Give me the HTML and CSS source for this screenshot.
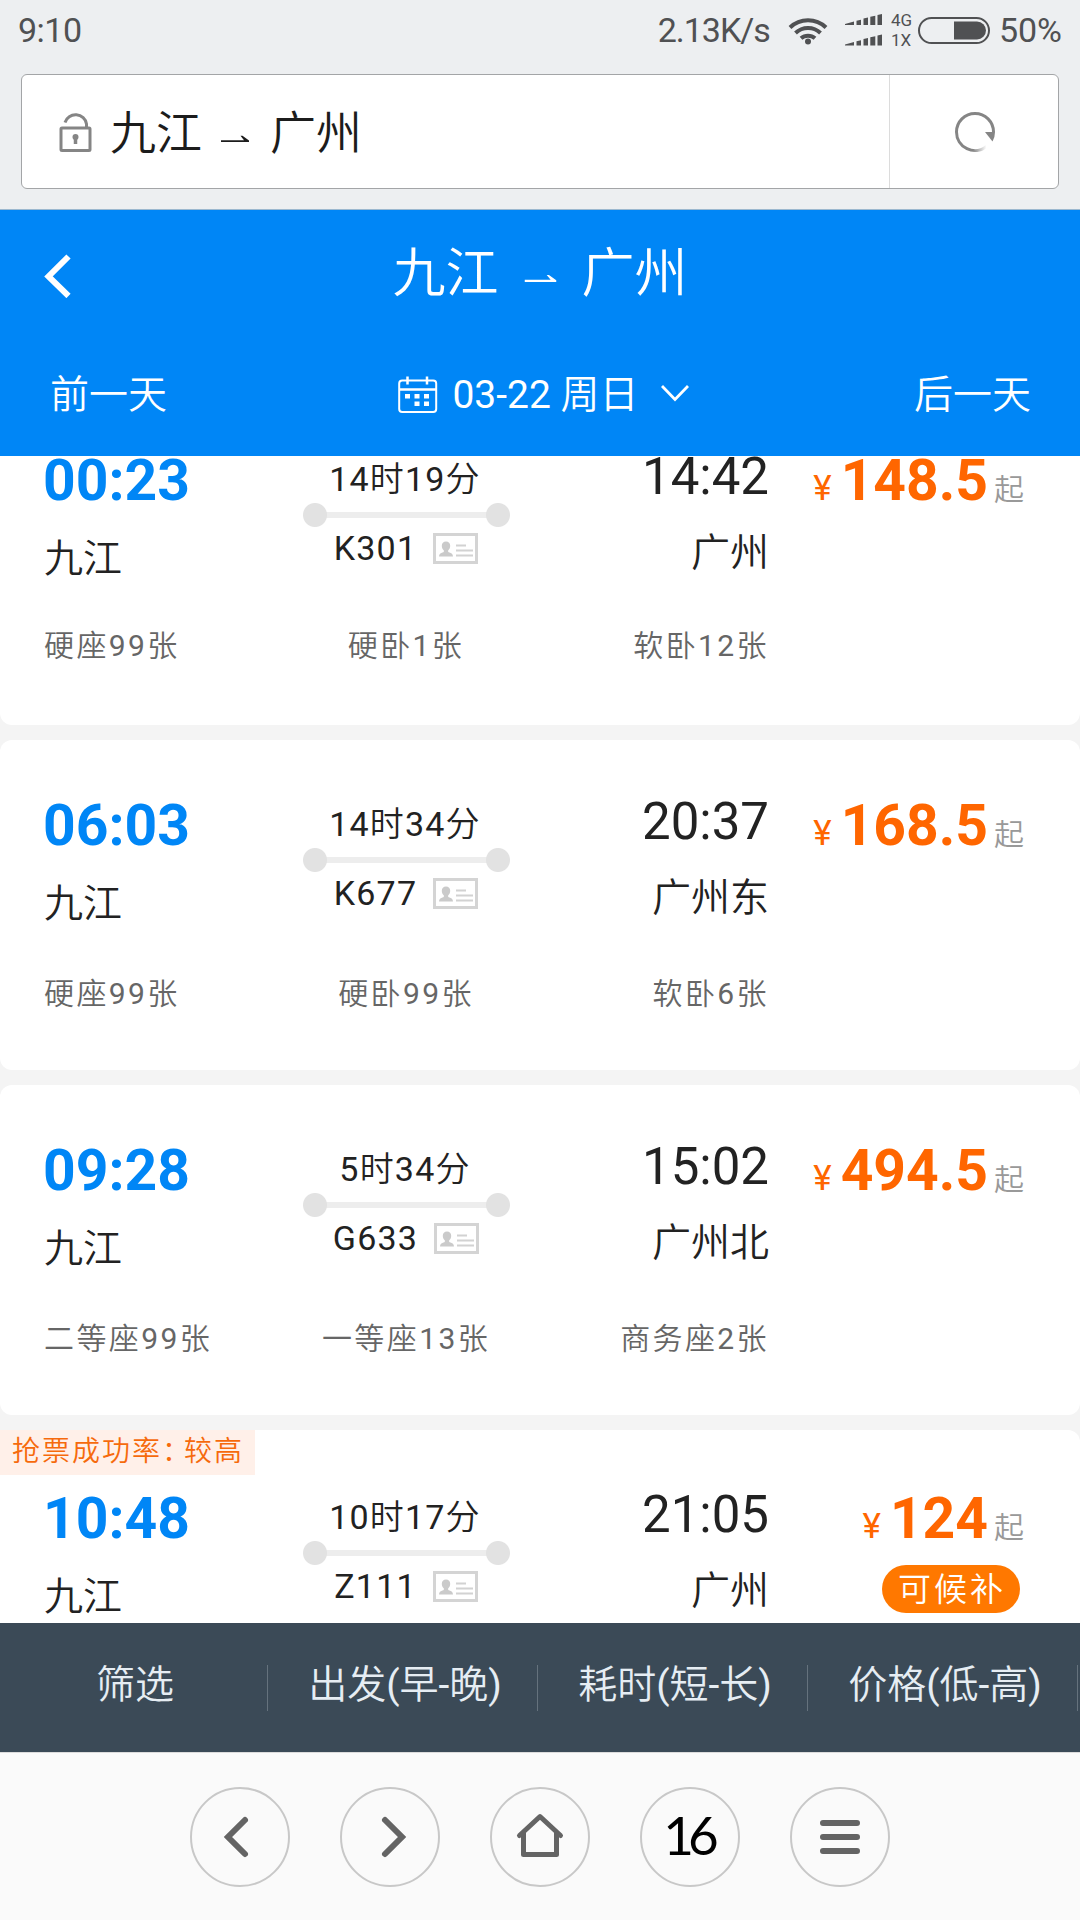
FILE: index.html
```
<!DOCTYPE html>
<html lang="zh-CN">
  <head>
    <meta charset="UTF-8">
    <title>九江 ⇀ 广州</title>
    <link rel="stylesheet" href="styles.css">
  </head>
  <body>
    <svg class="defs" width="0" height="0">
      <symbol id="id-card" viewBox="0 0 45 31">
        <rect x="1.500" y="1.500" width="42" height="28" fill="#fff" stroke="#d4d4d4" stroke-width="3"/>
        <path d="M13 8.500c2.600 0 4.200 1.800 4.200 4.300 0 2-.8 3.600-2 4.500v1.800c2.800.8 4.800 1.800 4.800 4.400H6c0-2.600 2-3.600 4.800-4.400v-1.800c-1.200-.9-2-2.500-2-4.500 0-2.500 1.600-4.300 4.200-4.300z" fill="#cacaca"/>
        <path d="M23 12.500h10M23 17.500h17M23 22.500h17" stroke="#d2d2d2" stroke-width="2.200"/>
      </symbol>
      <symbol id="harpoon" viewBox="0 0 28 8">
        <path d="M0 5.200h23L19.500 0.800h2L28 5.600v1.400H0z" fill="currentColor"/>
      </symbol>
    </svg>

    <div class="status-bar">
      <span class="clock">9:10</span>
      <span class="speed">2.13K/s</span>
      <svg class="wifi" width="40" height="29" viewBox="0 0 40 29">
        <path d="M2 11.500a26 26 0 0 1 36 0M7.500 17a18 18 0 0 1 25 0M13 22.300a10.500 10.500 0 0 1 14 0" fill="none" stroke="#505153" stroke-width="4"/>
        <circle cx="20" cy="25.500" r="3"/>
      </svg>
      <svg class="signal" width="38" height="32" viewBox="0 0 38 32">
        <path id="bars" d="M0 10l9-2.600V11H0zM11.500 6.800l4.500-1V11h-4.500zM18.500 4.500l4.500-1V11h-4.500zM25.300 2.800l5-1V11h-5zM32.500 1l4.500-1v11h-4.500z"/>
        <use href="#bars" y="20.500"/>
      </svg>
      <span class="network"><span>4G</span><span>1X</span></span>
      <svg class="battery" width="72" height="27" viewBox="0 0 72 27">
        <rect x="1" y="1" width="70" height="25" rx="12.500" fill="none" stroke="#505153" stroke-width="2"/>
        <path d="M36 4.500h23a9 9 0 0 1 0 18H36z"/>
      </svg>
      <span class="percent">50%</span>
    </div>

    <div class="browser-bar">
      <div class="address">
        <svg class="lock" width="34" height="42" viewBox="0 0 34 42" fill="none" stroke="#858585" stroke-width="3">
          <rect x="2" y="17" width="29" height="22.500" rx="1"/>
          <path d="M6 11.500a11 10.500 0 0 1 21.500 1.500v4"/>
          <circle cx="16.500" cy="26" r="3" fill="#858585" stroke="none"/>
          <path d="M16.500 26v7" stroke-width="3.500"/>
        </svg>
        <span>九江</span>
        <svg class="arrow" width="28" height="8"><use href="#harpoon"/></svg>
        <span>广州</span>
      </div>
      <div class="reload">
        <svg width="42" height="42" viewBox="0 0 42 42">
          <defs>
            <linearGradient id="fade" x1="0" x2="1" y1="0" y2="0">
              <stop offset="0.55" stop-color="#858585"/>
              <stop offset="1" stop-color="#858585" stop-opacity="0"/>
            </linearGradient>
          </defs>
          <path d="M39.500 21a18.500 18.500 0 1 0-37 0" fill="none" stroke="#858585" stroke-width="3"/>
          <path d="M2.500 21a18.500 18.500 0 0 0 30 14.500" fill="none" stroke="url(#fade)" stroke-width="3"/>
          <path d="M31 21h10q0 5-2.500 9.500z" fill="#858585"/>
        </svg>
      </div>
    </div>

    <div class="header">
      <div class="title-row">
        <svg class="back" width="27" height="44" viewBox="0 0 27 44">
          <path d="M24.500 2.500L4.500 22.500l20 19.500" fill="none" stroke="#fff" stroke-width="6"/>
        </svg>
        <h1 class="title">
          <span>九江</span>
          <svg class="arrow" width="33" height="9"><use href="#harpoon"/></svg>
          <span>广州</span>
        </h1>
      </div>
      <div class="date-row">
        <span>前一天</span>
        <div class="date">
          <svg class="calendar" width="40" height="38" viewBox="0 0 40 38">
            <rect x="1.200" y="4.500" width="37" height="31.500" rx="3" fill="none" stroke="#fff" stroke-width="2"/>
            <path d="M1 13.500h37M9.500 0.500v8M29 0.500v8" stroke="#fff" stroke-width="2.500"/>
            <path d="M7 18h5v4.500H7zM16.500 18h5v4.500h-5zM26 18h5v4.500h-5zM16.500 25.500h5V30h-5zM26 25.500h5V30h-5z" fill="#fff"/>
          </svg>
          <span class="day">03-22 周日</span>
          <svg class="chevron" width="28" height="18" viewBox="0 0 28 18">
            <path d="M1 2l13 13.500L27 2" fill="none" stroke="#fff" stroke-width="2.800"/>
          </svg>
        </div>
        <span>后一天</span>
      </div>
    </div>

    <div class="list">
      <div class="card card-first">
        <div class="train">
          <div class="depart"><div class="time">00:23</div><div class="city">九江</div></div>
          <div class="trip">
            <div class="duration">14时19分</div>
            <div class="line"></div>
            <div class="number">K301<svg width="45" height="31"><use href="#id-card"/></svg></div>
          </div>
          <div class="arrive"><div class="time">14:42</div><div class="city">广州</div></div>
          <div class="price"><div class="amount"><i>¥</i><b>148.5</b><small>起</small></div></div>
        </div>
        <div class="seats"><span>硬座99张</span><span>硬卧1张</span><span>软卧12张</span></div>
      </div>

      <div class="card">
        <div class="train">
          <div class="depart"><div class="time">06:03</div><div class="city">九江</div></div>
          <div class="trip">
            <div class="duration">14时34分</div>
            <div class="line"></div>
            <div class="number">K677<svg width="45" height="31"><use href="#id-card"/></svg></div>
          </div>
          <div class="arrive"><div class="time">20:37</div><div class="city">广州东</div></div>
          <div class="price"><div class="amount"><i>¥</i><b>168.5</b><small>起</small></div></div>
        </div>
        <div class="seats"><span>硬座99张</span><span>硬卧99张</span><span>软卧6张</span></div>
      </div>

      <div class="card">
        <div class="train">
          <div class="depart"><div class="time">09:28</div><div class="city">九江</div></div>
          <div class="trip">
            <div class="duration">5时34分</div>
            <div class="line"></div>
            <div class="number">G633<svg width="45" height="31"><use href="#id-card"/></svg></div>
          </div>
          <div class="arrive"><div class="time">15:02</div><div class="city">广州北</div></div>
          <div class="price"><div class="amount"><i>¥</i><b>494.5</b><small>起</small></div></div>
        </div>
        <div class="seats"><span>二等座99张</span><span>一等座13张</span><span>商务座2张</span></div>
      </div>

      <div class="card card-tagged">
        <div class="tag">抢票成功率<span class="colon">：</span>较高</div>
        <div class="train">
          <div class="depart"><div class="time">10:48</div><div class="city">九江</div></div>
          <div class="trip">
            <div class="duration">10时17分</div>
            <div class="line"></div>
            <div class="number">Z111<svg width="45" height="31"><use href="#id-card"/></svg></div>
          </div>
          <div class="arrive"><div class="time">21:05</div><div class="city">广州</div></div>
          <div class="price">
            <div class="amount"><i>¥</i><b>124</b><small>起</small></div>
            <div class="waitlist">可候补</div>
          </div>
        </div>
      </div>
    </div>

    <div class="filters">
      <div class="filter">筛选</div>
      <div class="filter">出发(早-晚)</div>
      <div class="filter">耗时(短-长)</div>
      <div class="filter">价格(低-高)</div>
    </div>

    <div class="nav">
      <div class="nav-button">
        <svg width="60" height="60" viewBox="0 0 60 60"><path d="M35 13L18 30l17 17"/></svg>
      </div>
      <div class="nav-button">
        <svg width="60" height="60" viewBox="0 0 60 60"><path d="M25 13l17 17-17 17"/></svg>
      </div>
      <div class="nav-button">
        <svg class="home" width="60" height="60" viewBox="0 0 60 60"><path d="M9.500 28.500L30 9.500l20.500 19M13.500 25.500v22h33v-22"/></svg>
      </div>
      <div class="nav-button tabs">16</div>
      <div class="nav-button">
        <svg width="60" height="60" viewBox="0 0 60 60"><path d="M13 16h34M13 30h34M13 44h34"/></svg>
      </div>
    </div>
  </body>
</html>
```

FILE: styles.css
```
* {
  box-sizing: border-box;
}
body {
  display: flex;
  flex-direction: column;
  width: 1080px;
  height: 1920px;
  margin: 0;
  overflow: hidden;
  background-color: #edeff1;
  color: #222;
  font-family: Roboto, "Noto Sans CJK SC DemiLight", "Noto Sans CJK SC", sans-serif;
}
svg {
  display: block;
  flex: none;
}
.defs {
  position: absolute;
}

/* phone status bar */
.status-bar {
  display: flex;
  align-items: center;
  height: 60px;
  padding: 0 18px;
  color: #505153;
  fill: #505153;
  font-size: 34px;
  line-height: 60px;
}
.clock {
  flex: 1;
  letter-spacing: -0.5px;
}
.speed {
  margin-right: 18px;
  letter-spacing: -1px;
}
.wifi {
  margin-right: 17px;
}
.signal {
  margin-right: 8px;
}
.network {
  display: flex;
  flex-direction: column;
  width: 27px;
  font-size: 17px;
  line-height: 20px;
}
.percent {
  margin-left: 9px;
}

/* address bar */
.browser-bar {
  display: flex;
  height: 115px;
  margin: 14px 21px 20px;
  background-color: #fff;
  border: 1px solid #a3a5a7;
  border-radius: 6px;
}
.address {
  display: flex;
  flex: 1;
  align-items: center;
  padding-left: 37px;
  color: #1c1c1c;
  font-size: 46px;
  line-height: 113px;
}
.address span {
  padding-top: 4px;
}
.lock {
  margin-right: 17px;
}
.address .arrow {
  margin: 15px 21px 0 19px;
}
.reload {
  display: flex;
  align-items: center;
  justify-content: center;
  width: 169px;
  padding-left: 2px;
  border-left: 1px solid #dcdcdc;
}

/* blue header */
.header {
  height: 247px;
  background-color: #0086f6;
  border-top: 1px solid #9cb8cf;
  color: #fff;
}
.title-row {
  display: grid;
  grid-template-columns: 1fr auto 1fr;
  align-items: center;
  height: 117px;
  padding: 0 44px;
}
.back {
  margin-top: 14px;
}
.title {
  display: flex;
  align-items: center;
  margin: 0;
  font-size: 53px;
  font-weight: 400;
}
.title .arrow {
  margin: 20px 25px 0;
}
.date-row {
  display: flex;
  align-items: center;
  justify-content: space-between;
  height: 127px;
  padding: 0 49px 0 50px;
  font-size: 39px;
}
.date {
  display: flex;
  align-items: center;
  padding-left: 6px;
}
.calendar {
  margin-top: 9px;
}
.day {
  margin: 0 22px 0 14px;
}
.chevron {
  margin-top: 5px;
}

/* train list */
.list {
  flex: 1;
  min-height: 0;
  overflow: hidden;
  background-color: #f4f4f4;
}
.card {
  height: 330px;
  margin-bottom: 15px;
  padding-top: 52px;
  background-color: #fff;
  border-radius: 12px;
}
.card-first {
  margin-top: -61px;
}
.train {
  display: grid;
  grid-template-columns: 241px 242px 242px 1fr;
  height: 182px;
  padding: 0 56px 0 44px;
}
.card-first .train {
  height: 179px;
}
.depart,
.price {
  padding-top: 4px;
}
.time {
  font-size: 51px;
  line-height: 60px;
}
.depart .time {
  margin: 0 0 18px -1px;
  color: #0086f6;
  font-size: 57px;
  font-weight: 700;
}
.city {
  font-size: 39px;
  line-height: 60px;
}
.arrive {
  text-align: right;
}
.arrive .time {
  margin-bottom: 16px;
}
.trip {
  padding-top: 12px;
  font-size: 34px;
  letter-spacing: 1.2px;
}
.duration {
  padding-right: 2px;
  line-height: 40px;
  text-align: center;
}
.line {
  width: 207px;
  height: 24px;
  margin: 4px auto 0;
  background:
    radial-gradient(circle at 12px 12px, #e2e2e2 11.5px, transparent 12.5px),
    radial-gradient(circle at 195px 12px, #e2e2e2 11.5px, transparent 12.5px),
    linear-gradient(#ededed, #ededed) center / 184px 6px no-repeat;
}
.number {
  display: flex;
  align-items: center;
  justify-content: center;
  gap: 16px;
  line-height: 42px;
}
.amount {
  display: flex;
  align-items: baseline;
  justify-content: flex-end;
  color: #ff6600;
  line-height: 60px;
}
.amount i {
  margin-right: 9px;
  font-size: 35px;
  font-style: normal;
}
.amount b {
  font-size: 57px;
}
.amount small {
  margin-left: 6px;
  color: #999;
  font-size: 30px;
}
.waitlist {
  width: 138px;
  height: 48px;
  margin: 7px 4px 0 auto;
  padding-left: 2px;
  background-color: #ff7800;
  border-radius: 24px;
  color: #fff;
  font-size: 33px;
  letter-spacing: 3px;
  line-height: 49px;
  text-align: center;
}
.seats {
  display: grid;
  grid-template-columns: 241px 242px 242px;
  padding-left: 44px;
  color: #666;
  font-size: 30px;
  letter-spacing: 2.4px;
  line-height: 40px;
}
.seats span:nth-child(2) {
  text-align: center;
}
.seats span:nth-child(3) {
  text-align: right;
}
.card-tagged {
  padding-top: 0;
}
.tag {
  width: 255px;
  height: 45px;
  margin-bottom: 10px;
  padding-left: 12px;
  background-color: #fff0e9;
  color: #f66a0c;
  font-size: 28px;
  letter-spacing: 2px;
  line-height: 43px;
  white-space: nowrap;
}
.colon {
  letter-spacing: -6px;
}

/* sort bar */
.filters {
  display: grid;
  grid-template-columns: repeat(4, 1fr);
  align-items: center;
  height: 129px;
  background-color: #3b4a57;
  color: #e6edf3;
}
.filter {
  height: 46px;
  margin-right: 2px;
  padding-left: 3px;
  border-right: 1px solid #65727d;
  font-size: 39px;
  line-height: 41px;
  text-align: center;
}

/* browser buttons */
.nav {
  display: flex;
  justify-content: center;
  gap: 50px;
  height: 168px;
  padding-top: 34px;
  background-color: #fafafa;
  border-top: 1px solid #dcdcdc;
}
.nav-button {
  display: flex;
  align-items: center;
  justify-content: center;
  width: 100px;
  height: 100px;
  border: 2px solid #c8c8c8;
  border-radius: 50%;
}
.nav-button svg {
  fill: none;
  stroke: #646464;
  stroke-linecap: round;
  stroke-width: 6;
}
.nav-button .home {
  stroke-linejoin: round;
  stroke-width: 5;
}
.tabs {
  padding: 0 4px 5px 0;
  color: #000;
  font-family: Lato, sans-serif;
  font-size: 53px;
  letter-spacing: -6px;
}
```
